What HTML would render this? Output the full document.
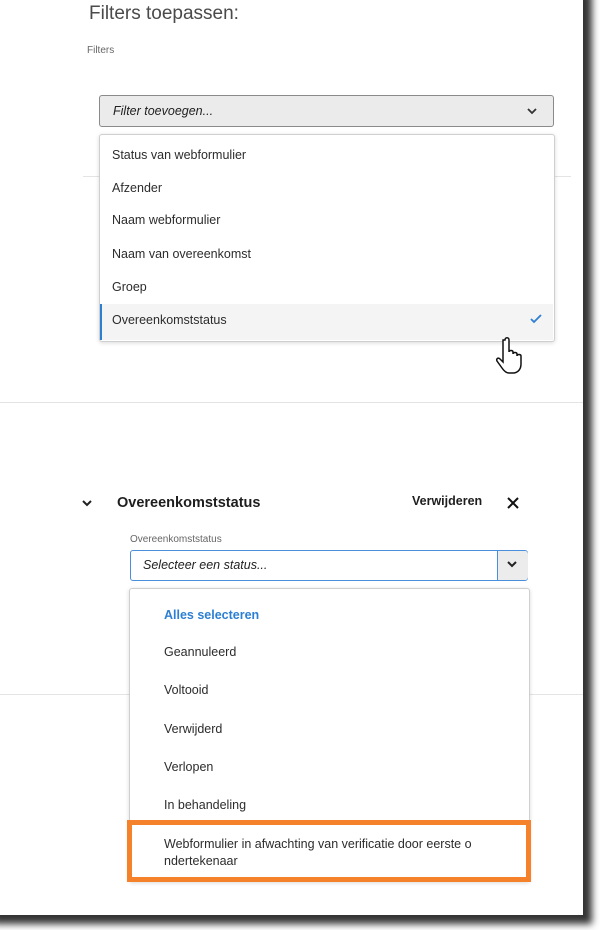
<!DOCTYPE html>
<html><head><meta charset="utf-8"><style>
html,body{margin:0;padding:0;background:#fff;}
body{width:600px;height:930px;position:relative;overflow:hidden;font-family:"Liberation Sans",sans-serif;}
.page{position:absolute;left:-10px;top:-10px;width:593px;height:925px;background:#fff;box-shadow:6px 6px 7px 3px rgba(0,0,0,.8);}
.a{position:absolute;white-space:nowrap;}
.hr{position:absolute;height:1px;background:#e4e4e4;}
.menu{position:absolute;background:#fff;border:1px solid #cfcfcf;border-radius:3px;box-shadow:0 1px 4px rgba(0,0,0,.15);}
.it{position:absolute;font-size:12.5px;color:#2c2c2c;}
</style></head><body>
<div class="page"></div>
<div class="a" style="left:89px;top:3px;font-size:19px;color:#4a4a4a;">Filters toepassen:</div>
<div class="a" style="left:87px;top:45px;font-size:10px;color:#666;">Filters</div>
<div class="hr" style="left:83px;top:176px;width:488px;"></div>
<div class="hr" style="left:0;top:402px;width:583px;"></div>
<div class="hr" style="left:0;top:694px;width:583px;"></div>

<div class="a" style="left:99px;top:95px;width:453px;height:30px;background:#ebebeb;border:1px solid #8a8a8a;border-radius:3px;"></div>
<div class="a" style="left:113px;top:104px;font-size:12.5px;font-style:italic;color:#222;">Filter toevoegen...</div>
<svg class="a" style="left:526px;top:106px" width="12" height="10"><path d="M2 3l4 4 4-4" stroke="#333" stroke-width="1.8" fill="none"/></svg>

<div class="menu" style="left:99px;top:134px;width:454px;height:206px;"></div>
<div class="a" style="left:100px;top:304px;width:453px;height:36px;background:#f4f4f4;border-left:2px solid #2d7fd3;box-sizing:border-box;"></div>
<div class="it" style="left:112px;top:148px;">Status van webformulier</div>
<div class="it" style="left:112px;top:181px;">Afzender</div>
<div class="it" style="left:112px;top:213px;">Naam webformulier</div>
<div class="it" style="left:112px;top:247px;">Naam van overeenkomst</div>
<div class="it" style="left:112px;top:280px;">Groep</div>
<div class="it" style="left:112px;top:313px;">Overeenkomststatus</div>
<svg class="a" style="left:529px;top:313px" width="14" height="12"><path d="M2 6l3 3 7-7" stroke="#2d7fd3" stroke-width="1.8" fill="none"/></svg>
<svg class="a" style="left:492px;top:336px" width="36" height="40"><path d="M13 4c0-3 4-3 4 0v12c0-2 4-2 4 0v2c0-2 4-2 4 0v2c0-2 4-2 4 0v8c0 5-3 9-8 9h-4c-3 0-5-2-7-5l-5-7c-1-2 1-4 3-2l3 3V4z" fill="#fff" stroke="#111" stroke-width="1.5"/></svg>

<svg class="a" style="left:81px;top:499px" width="12" height="10"><path d="M2 2l4 4 4-4" stroke="#222" stroke-width="2" fill="none"/></svg>
<div class="a" style="left:117px;top:495px;font-size:14.5px;font-weight:bold;color:#1e1e1e;">Overeenkomststatus</div>
<div class="a" style="left:412px;top:494px;font-size:12.5px;font-weight:bold;color:#1e1e1e;">Verwijderen</div>
<svg class="a" style="left:506px;top:496px" width="14" height="14"><path d="M2 2l10 10M12 2L2 12" stroke="#111" stroke-width="2"/></svg>
<div class="a" style="left:130px;top:534px;font-size:10px;color:#666;">Overeenkomststatus</div>
<div class="a" style="left:130px;top:550px;width:396px;height:29px;border:1.5px solid #4a8fdc;border-radius:3px;background:#fff;"></div>
<div class="a" style="left:497px;top:551px;width:30px;height:29px;background:#ececec;border-left:1.5px solid #4a8fdc;border-radius:0 3px 3px 0;"></div>
<svg class="a" style="left:506px;top:560px" width="12" height="10"><path d="M2 2l4 4 4-4" stroke="#222" stroke-width="2" fill="none"/></svg>
<div class="a" style="left:143px;top:558px;font-size:12.5px;font-style:italic;color:#222;">Selecteer een status...</div>

<div class="menu" style="left:129px;top:588px;width:399px;height:292px;"></div>
<div class="it" style="left:164px;top:608px;color:#2d7fd3;font-weight:bold;">Alles selecteren</div>
<div class="it" style="left:164px;top:645px;">Geannuleerd</div>
<div class="it" style="left:164px;top:683px;">Voltooid</div>
<div class="it" style="left:164px;top:722px;">Verwijderd</div>
<div class="it" style="left:164px;top:760px;">Verlopen</div>
<div class="it" style="left:164px;top:798px;">In behandeling</div>
<div class="a" style="left:127px;top:820px;width:404px;height:62px;border:5px solid #f5812a;box-sizing:border-box;background:#fff;"></div>
<div class="it" style="left:164px;top:836px;line-height:17px;">Webformulier in afwachting van verificatie door eerste o<br>ndertekenaar</div>
</body></html>
